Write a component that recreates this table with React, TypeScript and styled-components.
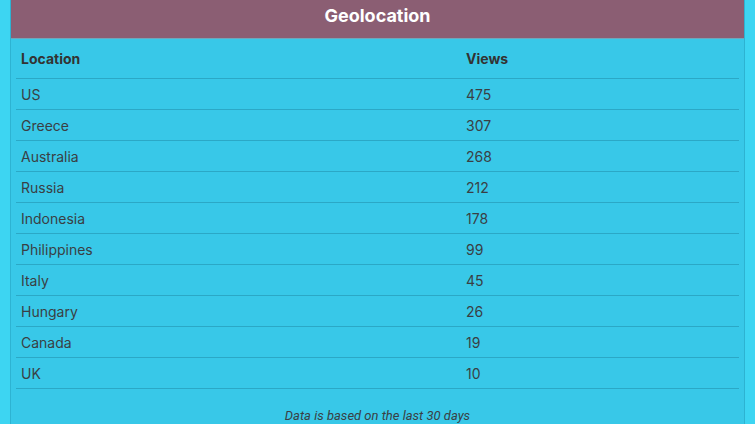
import React from 'react';
import styled, { createGlobalStyle } from 'styled-components';

const GlobalStyle = createGlobalStyle`
  body {
    margin: 0;
    background: #3dd5f2;
    font-family: Inter, Roboto, 'Liberation Sans', sans-serif;
    color: #333;
  }
`;

const Card = styled.section`
  margin: 0 10px;
  background: #38c8e8;
  border-left: 1px solid #2db3d2;
  border-right: 1px solid #2db3d2;
  min-height: 440px;
`;

const Header = styled.h2`
  margin: 0;
  height: 39px;
  line-height: 32px;
  background: #8b5e73;
  color: #fff;
  font-size: 18px;
  font-weight: 700;
  text-align: center;
  border-bottom: 1px solid #6fa6bb;
  box-sizing: border-box;
`;

const Body = styled.div`
  padding: 0 5px;
`;

const Table = styled.table`
  width: 100%;
  border-collapse: collapse;
  font-size: 14px;
`;

const HeadCell = styled.th<{ $w?: string }>`
  text-align: left;
  font-weight: 700;
  height: 39px;
  padding: 0 5px;
  border-bottom: 1px solid #2ba8c6;
  color: #333;
  vertical-align: middle;
  width: ${(p) => p.$w || 'auto'};
`;

const Cell = styled.td`
  height: 30px;
  padding: 0 5px;
  border-bottom: 1px solid #2ba8c6;
  color: #3a3f44;
  vertical-align: middle;
`;

const Note = styled.p`
  margin: 0;
  padding-top: 19px;
  text-align: center;
  font-family: Roboto, 'Liberation Sans', sans-serif;
  font-size: 13px;
  font-style: italic;
  color: #3a3f44;
`;

const rows: [string, number][] = [
  ['US', 475],
  ['Greece', 307],
  ['Australia', 268],
  ['Russia', 212],
  ['Indonesia', 178],
  ['Philippines', 99],
  ['Italy', 45],
  ['Hungary', 26],
  ['Canada', 19],
  ['UK', 10],
];

export default function App() {
  return (
    <>
      <GlobalStyle />
      <Card>
        <Header>Geolocation</Header>
        <Body>
          <Table>
            <thead>
              <tr>
                <HeadCell $w="435px">Location</HeadCell>
                <HeadCell>Views</HeadCell>
              </tr>
            </thead>
            <tbody>
              {rows.map(([country, views]) => (
                <tr key={country}>
                  <Cell>{country}</Cell>
                  <Cell>{views}</Cell>
                </tr>
              ))}
            </tbody>
          </Table>
          <Note>Data is based on the last 30 days</Note>
        </Body>
      </Card>
    </>
  );
}
